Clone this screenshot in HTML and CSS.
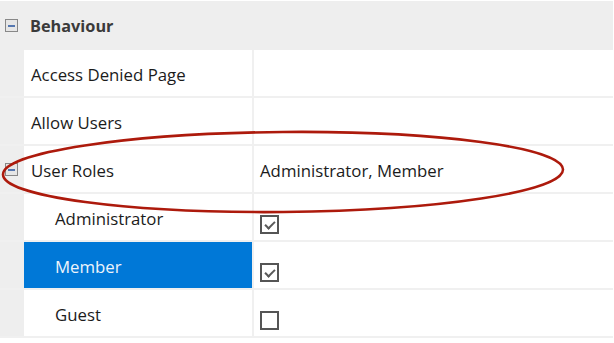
FILE: index.html
```html
<!DOCTYPE html>
<html lang="en">
<head>
    <meta charset="UTF-8">
    <title>Property Grid - Behaviour</title>
    <link rel="stylesheet" href="styles.css">
</head>
<body>

    <div class="grid">
        <div class="categoria">
            <span class="toggle"></span>
            <span class="categoria-nombre">Behaviour</span>
        </div>

        <div class="fila">
            <div class="gutter"></div>
            <div class="nombre">Access Denied Page</div>
            <div class="valor"></div>
        </div>

        <div class="fila">
            <div class="gutter"></div>
            <div class="nombre">Allow Users</div>
            <div class="valor"></div>
        </div>

        <div class="fila">
            <div class="gutter"><span class="toggle"></span></div>
            <div class="nombre">User Roles</div>
            <div class="valor">Administrator, Member</div>
        </div>

        <div class="fila hija">
            <div class="gutter"></div>
            <div class="nombre">Administrator</div>
            <div class="valor"><span class="check marcado"></span></div>
        </div>

        <div class="fila hija seleccionada">
            <div class="gutter"></div>
            <div class="nombre">Member</div>
            <div class="valor"><span class="check marcado"></span></div>
        </div>

        <div class="fila hija">
            <div class="gutter"></div>
            <div class="nombre">Guest</div>
            <div class="valor"><span class="check"></span></div>
        </div>

        <!-- marca roja encima de User Roles -->
        <svg class="marca" width="614" height="343" viewBox="0 0 614 343">
            <ellipse cx="283" cy="172" rx="280" ry="40" fill="none" stroke="#ad1a0c" stroke-width="2.6" transform="rotate(-0.5 283 172)"/>
        </svg>
    </div>

</body>
</html>
```

FILE: styles.css
```css
* {
    margin: 0;
    padding: 0;
    box-sizing: border-box;
}

body {
    font-family: 'Open Sans', 'Noto Sans', sans-serif;
    font-size: 16.8px;
    color: #1b1b1b;
    background-color: #ffffff;
}

.grid {
    position: relative;
    width: 613px;
    margin-top: 1px;
}

/* Cabecera de categoria */
.categoria {
    display: flex;
    align-items: center;
    height: 49px;
    background-color: #eeeeee;
    padding-left: 5px;
}

.categoria-nombre {
    font-weight: bold;
    font-size: 16.3px;
    color: #3a3a3a;
    margin-left: 12px;
}

.toggle {
    display: block;
    position: relative;
    width: 13px;
    height: 13px;
    border: 1px solid #888888;
    background-color: #e6e6e6;
}

.toggle:after {
    content: '';
    position: absolute;
    left: 2px;
    top: 5px;
    width: 7px;
    height: 2px;
    background: #5577b0;
}

/* Filas */
.fila {
    display: flex;
    height: 48px;
    border-bottom: 2px solid #f0f0f0;
}

.gutter {
    width: 24px;
    flex-shrink: 0;
    background-color: #eeeeee;
    padding-left: 5px;
    display: flex;
    align-items: center;
}

.nombre {
    width: 230px;
    flex-shrink: 0;
    padding-left: 7px;
    padding-top: 2px;
    display: flex;
    align-items: center;
    border-right: 2px solid #f0f0f0;
    background-color: #ffffff;
}

.valor {
    flex: 1;
    padding-left: 6px;
    padding-top: 2px;
    display: flex;
    align-items: center;
}

.hija .nombre {
    padding-left: 31px;
}

.seleccionada .nombre {
    background-color: #0078d7;
    color: #eef4fb;
}

/* Casillas */
.check {
    display: block;
    position: relative;
    width: 19px;
    height: 19px;
    border: 2px solid #555555;
    margin-top: 12px;
}

.check.marcado:after {
    content: '';
    position: absolute;
    left: 5px;
    top: 2px;
    width: 4px;
    height: 8px;
    border-right: 2px solid #5a5a5a;
    border-bottom: 2px solid #5a5a5a;
    transform: rotate(45deg);
}

.marca {
    position: absolute;
    left: 0;
    top: -1px;
    pointer-events: none;
}
```
